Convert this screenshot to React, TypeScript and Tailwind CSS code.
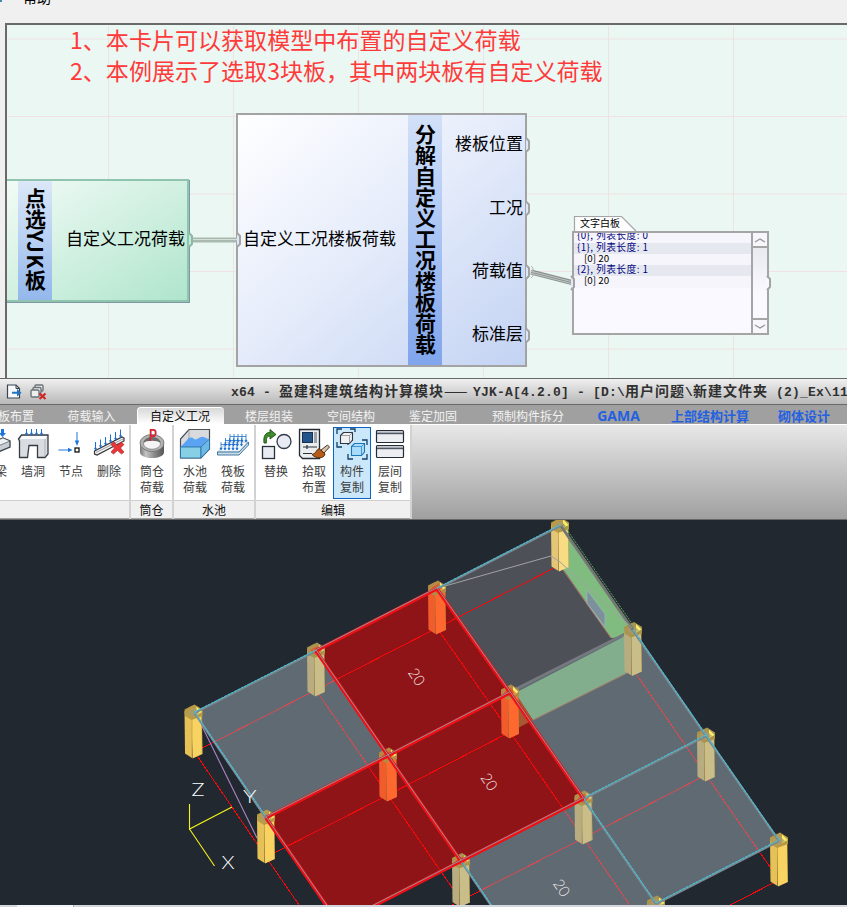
import React from "react";

const CJK = "font-['Noto_Sans_CJK_SC',sans-serif]";

/* ---------- node editor ---------- */

function Port({ x, y, color = "#a3a3a3", fill = "#dfe8f8" }: { x: number; y: number; color?: string; fill?: string }) {
  return (
    <path
      d={`M${x - 2} ${y - 7} l3 3 v8 l-3 3`}
      fill={fill}
      stroke={color}
      strokeWidth="2"
      strokeLinejoin="round"
    />
  );
}

function NodeCanvas() {
  return (
    <div className="relative ml-[5px] h-[355px] shrink-0 overflow-hidden border-l-2 border-t-2 border-[#6a6a6a] bg-[#eaf7f3]">
      <svg className="absolute -left-[7px] -top-[25px]" width="847" height="380" viewBox="0 0 847 380">
        <g stroke="#f0e2e2" strokeWidth="1">
          {[108.5, 233.5, 358.5, 483.5, 608.5, 733.5].map((x) => (
            <line key={x} x1={x} y1="26" x2={x} y2="380" />
          ))}
          {[39, 116.5, 194, 271.5, 349].map((y) => (
            <line key={y} x1="8" y1={y} x2="847" y2={y} />
          ))}
        </g>
      </svg>

      <div className={`absolute left-[63px] -top-px whitespace-pre text-[23.060px] leading-[31px] text-[#ff3a3a] ${CJK}`}>
        <div>1、本卡片可以获取模型中布置的自定义荷载</div>
        <div>2、本例展示了选取3块板，其中两块板有自定义荷载</div>
      </div>

      <div className="absolute -left-[4px] top-[154px] flex h-[123px] w-[186px] border-2 border-[#8fc4ae] bg-linear-to-br from-[#f2fbf7] to-[#afe5cc] shadow-[1px_1px_0_#7d98a3]">
        <div className="ml-[13px] flex w-[34px] items-center justify-center bg-linear-to-b from-[#dbe8f8] to-[#94b7ec]">
          <span className={`-mt-[3px] whitespace-nowrap text-[21px] font-bold leading-[21px] text-black [writing-mode:vertical-rl] ${CJK}`}>
            点选<span className="tracking-[1.200px]">YJK</span>板
          </span>
        </div>
        <div className={`flex flex-1 items-center justify-end pr-[2px] text-[17px] text-black ${CJK}`}>
          <span className="-mt-[6px]">自定义工况荷载</span>
        </div>
      </div>

      <div className="absolute left-[229px] top-[88px] flex h-[254px] w-[291px] border-2 border-[#a3a3a3] bg-linear-to-br from-white via-[#e4ebfa] to-[#c3d3f3]">
        <div className={`flex w-[170px] items-center pl-[5px] text-[17px] text-black ${CJK}`}>
          <span className="-mt-[5px] whitespace-nowrap">自定义工况楼板荷载</span>
        </div>
        <div className="flex w-[34px] items-center justify-center bg-linear-to-b from-[#d3e1f8] to-[#80a5ec]">
          <span className={`-mt-px whitespace-nowrap text-[21px] font-bold leading-[21px] text-black [writing-mode:vertical-rl] ${CJK}`}>分解自定义工况楼板荷载</span>
        </div>
        <div className={`flex flex-1 flex-col items-end pr-[2px] pt-[12px] text-[17px] text-black ${CJK}`}>
          <span className="h-[63.5px] leading-[32px]">楼板位置</span>
          <span className="h-[63.5px] leading-[32px]">工况</span>
          <span className="h-[63px] leading-[32px]">荷载值</span>
          <span className="leading-[32px]">标准层</span>
        </div>
      </div>

      <div className="absolute left-[565px] top-[206px] flex h-[104px] w-[197px] border-2 border-[#a5a5a5] bg-[#f9f9ff]">
        <div className={`flex-1 overflow-hidden whitespace-pre text-[9.8px] tracking-[0.400px] text-[#00007e] ${CJK}`}>
          <div className="flex h-[10px] items-center overflow-hidden bg-[#f6f5fb] pl-[3px] leading-none"><span className="-mt-[5px]">{"{0}, 列表长度: 0"}</span></div>
          <div className="h-[11px] bg-[#e5e8ef] pl-[3px] leading-[8px]">{"{1}, 列表长度: 1"}</div>
          <div className="h-[11px] bg-[#f6f5fb] pl-[10px] leading-[8px] tracking-normal text-black">[0] 20</div>
          <div className="h-[11px] bg-[#e5e8ef] pl-[3px] leading-[8px]">{"{2}, 列表长度: 1"}</div>
          <div className="h-[12px] bg-[#f6f5fb] pl-[10px] leading-[9px] tracking-normal text-black">[0] 20</div>
        </div>
        <div className="flex w-[16px] flex-col justify-between border-l-2 border-[#a5a5a5] bg-linear-to-b from-[#e4e5ea] to-[#f9f9ff] to-60%">
          <div className="flex h-[15px] items-center justify-center border-b-2 border-[#a5a5a5] bg-[#f6f6fb]">
            <svg width="12" height="6" viewBox="0 0 12 6"><path d="M1 5 L6 2 L11 5" fill="none" stroke="#999" strokeWidth="1.4" /></svg>
          </div>
          <div className="flex h-[15px] items-center justify-center border-t-2 border-[#a5a5a5] bg-[#f6f6fb]">
            <svg width="12" height="6" viewBox="0 0 12 6"><path d="M1 1 L6 4 L11 1" fill="none" stroke="#999" strokeWidth="1.4" /></svg>
          </div>
        </div>
      </div>

      <svg className="absolute -left-[7px] -top-[25px]" width="847" height="380" viewBox="0 0 847 380">
        <path d="M574.5 231 V216.5 H621.5 L636 231" fill="#fdfdff" stroke="#a5a5a5" strokeWidth="1.2" />
        <g>
          <line x1="193" y1="240" x2="238" y2="240" stroke="#a9b9b1" strokeWidth="5" />
          <line x1="193" y1="239.5" x2="238" y2="239.5" stroke="#d2dfd9" strokeWidth="1" />
          <line x1="531" y1="272" x2="574" y2="283" stroke="#8a918f" strokeWidth="5" />
          <line x1="531" y1="271.2" x2="574" y2="282.2" stroke="#c5cbc9" strokeWidth=".9" />
          <line x1="531" y1="273.2" x2="574" y2="284.2" stroke="#c5cbc9" strokeWidth=".9" />
        </g>
        <Port x={191} y={240} color="#8db7a6" fill="#c4ead8" />
        <Port x={239} y={240} />
        <Port x={528} y={145} />
        <Port x={528} y={208.5} />
        <Port x={528} y={272} />
        <Port x={528} y={335.5} />
        <Port x={573} y={283} />
        <Port x={769} y={283} fill="#f9f9ff" />
        <path d="M531 266 l2 2 v8 l-2 2" fill="none" stroke="#b5b5b5" strokeWidth="1" />
      </svg>
      <div className={`absolute left-[573px] top-[190px] text-[10px] leading-[15px] text-black ${CJK}`}>文字白板</div>
    </div>
  );
}

/* ---------- ribbon icons ---------- */

function Arrow({ x, y, len, w = 1 }: { x: number; y: number; len: number; w?: number }) {
  return (
    <g stroke="#1c6fd0" fill="#1c6fd0">
      <line x1={x} y1={y} x2={x} y2={y + len} strokeWidth={w} />
      <path d={`M${x - 1.2} ${y + len - 2} h2.4 l-1.2 2.2z`} strokeWidth="0.4" />
    </g>
  );
}

function Icon({ children }: { children: React.ReactNode }) {
  return (
    <svg width="32" height="32" viewBox="0 0 32 32" className="shrink-0">
      {children}
    </svg>
  );
}

const BeamIcon = () => (
  <Icon>
    <path d="M4 18 L24 10 L31 13 V19 L12 27 L4 24z" fill="#c8ced4" stroke="#39424b" strokeWidth="1.3" />
    <path d="M4 18 L24 10 L31 13 L12 21z" fill="#eef1f3" stroke="#39424b" strokeWidth=".6" />
    <path d="M22 1 h3 v4 h2 l-3.500 4 l-3.500 -4 h2z" fill="#1c75dd" />
  </Icon>
);

const WallIcon = () => (
  <Icon>
    <path d="M1.500 11 L4.500 7 H31 V26 L28 29.500 H20.500 V17.500 H12 L10.500 29.500 H2.500 V13z" fill="#d9dce0" stroke="#343c44" strokeWidth="1.300" />
    <path d="M3 11 L5 8 H30 L28 11z" fill="#fafbfb" />
    <path d="M28 11 V28.500" stroke="#a5acb2" strokeWidth=".8" />
    {[9.5, 14.5, 19.5, 24.5].map((x) => <Arrow key={x} x={x} y={1} len={6} />)}
  </Icon>
);

const JointIcon = () => (
  <Icon>
    <rect x="20" y="20" width="4" height="4" fill="#fff" stroke="#111" strokeWidth="1.3" />
    <path d="M22 4 V14 M3.500 22 H14" stroke="#1c75dd" strokeWidth="1" />
    <path d="M19.800 12.500 h4.400 l-2.200 5.500z M13 19.800 v4.400 l4.500 -2.200z" fill="#1c75dd" />
  </Icon>
);

const DeleteIcon = () => (
  <Icon>
    <path d="M1.500 23 L29 9 L31 10 V13 L4 27 L1.500 26z" fill="#f0f0f0" stroke="#333" strokeWidth="1.2" />
    <path d="M3 24.500 L30 11" stroke="#9aa1a8" strokeWidth="1" />
    <Arrow x={2.5} y={14} len={8} />
    <Arrow x={7.500} y={11.500} len={8} />
    <Arrow x={12.500} y={9} len={8} />
    <Arrow x={17.500} y={6.500} len={8} />
    <Arrow x={22.500} y={4} len={8} />
    <Arrow x={27.500} y={1.500} len={8} />
    <path d="M19 15 L21 14 L24.500 17.500 L28 14 L31 16.500 L27.500 20 L31 24 L28.500 26 L24.500 22.500 L20.500 26 L18 24 L21.500 20 L18 16.500z" fill="#e8373a" stroke="#a91a1d" strokeWidth=".6" />
  </Icon>
);

const SiloIcon = () => (
  <Icon>
    <defs>
      <linearGradient id="silo"><stop offset="0" stopColor="#777" /><stop offset=".25" stopColor="#c4c4c4" /><stop offset=".6" stopColor="#8a8a8a" /><stop offset="1" stopColor="#555" /></linearGradient>
    </defs>
    <path d="M4 15 V24 C4 32 28 32 28 24 V15z" fill="url(#silo)" />
    <ellipse cx="16" cy="15" rx="12" ry="8.500" fill="#b2b2b2" stroke="#6d6d6d" strokeWidth=".8" />
    <ellipse cx="16" cy="15.500" rx="8.500" ry="5.800" fill="#f4f4f4" stroke="#777" strokeWidth=".7" />
    <path d="M7.500 15 A8.500 6 0 0 1 24.500 15 A9.500 4 0 0 0 7.500 15" fill="#6b6b6b" />
    <text x="13" y="12.500" fontFamily="Liberation Sans" fontWeight="bold" fontSize="16" textLength="8" lengthAdjust="spacingAndGlyphs" fill="#d72532">P</text>
  </Icon>
);

const PoolIcon = () => (
  <Icon>
    <path d="M1.500 11 L10 1.500 H30.500 V21 L22 30 H1.500z" fill="#d8dadd" stroke="#4a4f55" strokeWidth="1.200" />
    <path d="M10 2 V12" fill="none" stroke="#999" strokeWidth=".8" />
    <path d="M1.500 19 L8 12 C10 9 13 9 15 11 C18 13 21 8 24 9 C26 9 28 11 30 11 L22 19 V21 H1.500z" fill="#5aa3f2" />
    <path d="M1.500 19 H22 V30 H1.500z" fill="#86cfe4" stroke="#24699f" strokeWidth=".8" />
    <path d="M22 19 L30.500 11 V21 L22 30z" fill="#6db9e6" stroke="#24699f" strokeWidth=".8" />
  </Icon>
);

const RaftIcon = () => (
  <Icon>
    <path d="M0.500 24 L10 14 H31 L22 24z" fill="#f4f8fb" stroke="#a9bccb" strokeWidth=".8" />
    <path d="M0.500 24 H22 L31.500 14 V17 L22 27 H0.500z" fill="#c4dcec" stroke="#386b93" strokeWidth=".9" />
    {[0, 1, 2].map((r) => (
      <g key={r}>
        <line x1={4 + r * 4.500} y1={16.500 - r * 4} x2={20 + r * 4.500} y2={16.500 - r * 4} stroke="#2a77cf" strokeWidth=".8" />
        {[0, 1, 2, 3, 4].map((c) => <Arrow key={c} x={4 + r * 4.500 + c * 4} y={14 - r * 4} len={8} w={0.8} />)}
      </g>
    ))}
  </Icon>
);

const SwapIcon = () => (
  <Icon>
    <rect x="2.500" y="18.500" width="12" height="12" fill="#e9ebf2" stroke="#26303b" strokeWidth="1.300" />
    <circle cx="24" cy="13.500" r="7" fill="#e9ebf4" stroke="#303a47" strokeWidth="1.300" />
    <path d="M4 15 C3 8 6 4 10 4.500 V1.500 L16 6.500 L10 11 V8 C7 8 6 10 6.500 15z" fill="#3d8d2c" stroke="#1e5016" strokeWidth=".9" />
  </Icon>
);

const PickIcon = () => (
  <Icon>
    <path d="M1.500 1.500 H21.500 V30.500 H4.500 L1.500 27.500z" fill="#ebecee" stroke="#252c36" strokeWidth="1.300" />
    <rect x="4.500" y="4.500" width="10" height="10" fill="#21558c" stroke="#17314f" />
    <rect x="16" y="4" width="3" height="11" fill="#9da2aa" />
    <path d="M5 19 H19 M9 17 V21 M5 25.500 H14" stroke="#29313a" strokeWidth="1.200" />
    <path d="M29.500 17 L31.500 19 L26 25 L23 22z" fill="#d5c3ae" stroke="#4a3a2c" />
    <path d="M21 20.500 L27 26 C26 31 18 31 14 26.500 C18 26 18 22 21 20.500z" fill="#b65c18" stroke="#54290d" />
  </Icon>
);

const CopyIcon = () => (
  <Icon>
    <path d="M1 6 V1 H6 M14 1 H19 V4 M1 14 V19 H6 M12 17 V12 H17 M26 12 H31 V17 M12 26 V31 H17 M26 31 H31 V26" fill="none" stroke="#123e66" strokeWidth="1.300" />
    <path d="M4.500 7.500 L7.500 4.500 H16.500 V12 L13.500 15.500 H4.500z" fill="#f0f1f2" stroke="#30363d" strokeWidth="1.100" />
    <path d="M4.500 7.500 H13.500 V15.500 M13.500 7.500 L16.500 4.500" fill="none" stroke="#777d84" strokeWidth=".7" />
    <path d="M15.500 18.500 L18.500 15.500 H28.500 V24 L25.500 27.500 H15.500z" fill="#a8dcfa" stroke="#1978b7" strokeWidth="1.100" />
    <path d="M15.500 18.500 H25.500 V27.500 M25.500 18.500 L28.500 15.500" fill="none" stroke="#1978b7" strokeWidth=".7" />
  </Icon>
);

const FloorIcon = () => (
  <Icon>
    {[2.5, 17.5].map((y) => (
      <g key={y}>
        <rect x="2.500" y={y} width="27" height="12" rx="1" fill="#eceef2" stroke="#252c36" strokeWidth="1.200" />
        <rect x="3" y={y + 1} width="26" height="2" fill="#a3a9b0" />
        <path d={`M2.5 ${y + 3.2} H29.5`} stroke="#252c36" strokeWidth=".9" />
      </g>
    ))}
  </Icon>
);

/* ---------- ribbon ---------- */

function Tool({ icon, lines, selected = false }: { icon: React.ReactNode; lines: string[]; selected?: boolean }) {
  return (
    <div
      className={`flex h-[72px] w-[38px] shrink-0 flex-col items-center border ${
        selected ? "border-[#0a64c0] bg-[#cbe8fa]" : "border-transparent"
      }`}
    >
      {icon}
      <div className={`mt-[3px] text-center text-[12px] leading-[16px] text-[#3c3c3c] ${CJK}`}>
        {lines.map((l) => (
          <div key={l}>{l}</div>
        ))}
      </div>
    </div>
  );
}

function Group({ label, width, children }: { label: string; width: string; children: React.ReactNode }) {
  return (
    <div className={`flex flex-col border-r-2 border-[#d2d2d2] ${width}`}>
      <div className="flex h-[75px] justify-end overflow-hidden bg-white pt-[2px]">{children}</div>
      <div className={`h-[18px] border-t border-[#cfcfcf] bg-[#f0f0f0] text-center text-[12px] leading-[18px] text-[#111] ${CJK}`}>{label}</div>
    </div>
  );
}

type Run = { text: string; kind: "cjk" | "latin" | "dash" };
const titleRuns: Run[] = [
  { text: "x64 - ", kind: "latin" },
  { text: "盈建科建筑结构计算模块", kind: "cjk" },
  { text: "——", kind: "dash" },
  { text: "YJK-A[4.2.0] - [D:\\", kind: "latin" },
  { text: "用户问题", kind: "cjk" },
  { text: "\\", kind: "latin" },
  { text: "新建文件夹", kind: "cjk" },
  { text: " (2)_Ex\\11", kind: "latin" },
];
const runStyle = {
  cjk: "text-[14px] tracking-[1px] font-['Noto_Sans_CJK_SC',sans-serif]",
  latin: "text-[13px] tracking-[0.200px] font-['Liberation_Mono',monospace]",
  dash: "text-[14px] w-[29px] tracking-[1px] font-normal font-['Noto_Sans_CJK_SC',sans-serif]",
};

function Ribbon() {
  return (
    <div className="flex h-[142px] shrink-0 flex-col border-y border-[#686868]">
      <div className="flex h-[25px] items-center overflow-hidden bg-linear-to-b from-[#f0f0f0] to-[#b9b9b9]">
        <svg width="231" height="25" viewBox="0 379 231 25" className="shrink-0">
          <path d="M7.500 385 H16 L19.500 388.500 V398 H7.500z" fill="#f7f8fa" stroke="#3a4450" strokeWidth="1.200" />
          <path d="M16 385 V388.500 H20" fill="none" stroke="#3a4450" />
          <path d="M12 391.800 H17 V389 L21.500 392.800 L17 396.500 V393.800 H12z" fill="#2373c4" />
          <rect x="35" y="385" width="8" height="6" rx="1" fill="#eee" stroke="#6b7278" strokeWidth="1.400" />
          <rect x="33" y="387.500" width="8" height="6" rx="1" fill="#eee" stroke="#6b7278" strokeWidth="1.400" />
          <rect x="31" y="390" width="8" height="7" rx="1" fill="#eee" stroke="#6b7278" strokeWidth="1.400" />
          <path d="M39.500 393.500 L45.500 399 M45.500 393.500 L39.500 399" stroke="#cf2424" strokeWidth="2.200" />
        </svg>
        <div className="flex items-baseline whitespace-pre font-bold leading-[22px] text-[#303030]">
          {titleRuns.map((r, i) => (
            <span key={i} className={runStyle[r.kind]}>{r.text}</span>
          ))}
        </div>
      </div>

      <div className={`flex h-[21px] border-b border-t border-b-white border-t-[#6a6a6a] bg-[#a0a0a0] text-center text-[12px] leading-[21px] text-[#f2f2f2] ${CJK}`}>
        <div className="w-[50px] text-left">
          <span className="-ml-[2px]">板布置</span>
        </div>
        <div className="w-[83px]">荷载输入</div>
        <div className="ml-[4px] mt-[2px] w-[87px] rounded-t-sm border-l border-t border-white bg-linear-to-b from-[#d8d8d8] to-white pr-[2px] leading-[15px] text-[#111]">自定义工况</div>
        <div className="ml-[4px] w-[82px]">楼层组装</div>
        <div className="w-[82px]">空间结构</div>
        <div className="w-[82px]">鉴定加固</div>
        <div className="w-[108px]">预制构件拆分</div>
        <div className="w-[73px] text-[14px] font-bold text-[#2460e0] font-['Open_Sans',sans-serif]">GAMA</div>
        <div className="w-[110px] text-[13px] font-bold text-[#2460e0]">上部结构计算</div>
        <div className="w-[78px] text-[13px] font-bold text-[#2460e0]">砌体设计</div>
      </div>

      <div className="flex h-[94px] bg-linear-to-b from-[#e8e8e8] to-[#a0a0a0]">
        <Group label="" width="w-[131px] [&>div:first-child]:pr-px">
          <Tool icon={<BeamIcon />} lines={["主梁"]} />
          <Tool icon={<WallIcon />} lines={["墙洞"]} />
          <Tool icon={<JointIcon />} lines={["节点"]} />
          <Tool icon={<DeleteIcon />} lines={["删除"]} />
        </Group>
        <Group label="筒仓" width="w-[43px] [&>div:first-child]:pr-[1px]">
          <Tool icon={<SiloIcon />} lines={["筒仓", "荷载"]} />
        </Group>
        <Group label="水池" width="w-[82px] [&>div:first-child]:pr-[2px]">
          <Tool icon={<PoolIcon />} lines={["水池", "荷载"]} />
          <Tool icon={<RaftIcon />} lines={["筏板", "荷载"]} />
        </Group>
        <Group label="编辑" width="w-[156px] [&>div:first-child]:pr-px">
          <Tool icon={<SwapIcon />} lines={["替换"]} />
          <Tool icon={<PickIcon />} lines={["拾取", "布置"]} />
          <Tool icon={<CopyIcon />} lines={["构件", "复制"]} selected />
          <Tool icon={<FloorIcon />} lines={["层间", "复制"]} />
        </Group>
      </div>
    </div>
  );
}

/* ---------- 3D model view ---------- */

type P = [number, number];
const N: Record<string, P> = {
  A: [560, 525], B: [437, 588], C: [316, 650], D: [194.500, 712],
  E: [633, 629.500], F: [510, 692], G: [388, 755], H: [266, 817],
  I: [706, 735], J: [583.500, 798], K: [461, 860.500], L: [339, 923],
  M: [779, 840], O: [656, 903], Q: [533, 966],
};
const poly = (k: string) => k.split("").map((c) => N[c].join(",")).join(" ");

const greySlabs = ["DCGH", "FEIJ", "KJOQ", "JIMO"];
const redSlabs = ["CBFG", "GFJK", "HGKL"];
const baseEdges = ["DC", "CB", "BA", "HG", "GF", "KJ", "JI", "LK", "OM", "DH", "HL", "CG", "GK", "KQ", "BF", "FJ", "JO", "EI", "IM"];
const cyanEdges = ["DC", "DH", "BA", "EI", "IM", "IJ", "JO", "OM", "KQ"];
const redEdges = ["CB", "CG", "BF", "GF", "FJ", "GK", "HG", "HL", "JK", "KL"];

const tones: Record<string, [string, string, string]> = {
  yellow: ["#e6c158", "#f8d362", "#b99c48"],
  light: ["#e3c676", "#f8dc83", "#b99c48"],
  pale: ["#b8ad80", "#c9bd89", "#aa9550"],
  red: ["#f05c2c", "#ff6930", "#b58a48"],
};

function Column({ at, tone }: { at: string; tone: string }) {
  const [x, y] = N[at];
  const [l, r, t] = tones[tone];
  const onRed = "CBGFJKH".includes(at);
  return (
    <g transform={`translate(${x + (at === "D" ? 0 : 1)} ${y})`}>
      <path d="M-10 -1 L-2.500 6 V46 L-9.500 41.500z" fill={l} />
      <path d="M-3 6 L7 0 L8 42 L-2 46.500z" fill={r} />
      <path d="M-2.500 6 V46" stroke="#a88530" strokeWidth=".8" opacity=".6" />
      <path d="M-10 -2.500 L0 -7.500 L8 -2.500 V4 L-3 8 L-9.500 4z" fill={t} />
      <path d="M2 -5.500 L7.500 0 L2 3z" fill={tone === "pale" && onRed ? "#d8cd88" : "#faf06a"} />
      <path d="M-7 0 L0 -4 L5 1 L-2 5z" fill={onRed && at !== "H" ? "#e0522c" : "#a59b74"} opacity=".75" />
      <path d="M-9.500 -2 L-3 -6 M-3 7 L7.500 2 V42" fill="none" stroke="#b38d2e" strokeWidth=".7" opacity=".6" />
    </g>
  );
}

function BaseLines({ color }: { color: string }) {
  return (
    <g stroke={color} strokeWidth="1" shapeRendering="crispEdges">
      {baseEdges.map((e) => (
        <line key={e} x1={N[e[0]][0]} y1={N[e[0]][1] + 40} x2={N[e[1]][0]} y2={N[e[1]][1] + 40} />
      ))}
    </g>
  );
}

function ModelView() {
  const cols: [string, string][] = [
    ["A", "light"], ["B", "red"], ["C", "pale"], ["D", "yellow"],
    ["E", "pale"], ["F", "red"], ["G", "red"], ["H", "yellow"],
    ["I", "pale"], ["J", "pale"], ["K", "pale"], ["M", "yellow"], ["O", "pale"],
  ];
  return (
    <svg width="847" height="385" viewBox="0 520 847 385" className="block shrink-0 bg-[#222830]">
      <defs>
        <clipPath id="redArea">{redSlabs.map((s) => <polygon key={s} points={poly(s)} />)}</clipPath>
        <clipPath id="greyArea">{greySlabs.map((s) => <polygon key={s} points={poly(s)} />)}</clipPath>
      </defs>
      <polygon points={poly("BAEF")} fill="#4d5157" />
      <BaseLines color="#f80808" />
      {greySlabs.map((s) => <polygon key={s} points={poly(s)} fill="#606a72" />)}
      <g clipPath="url(#greyArea)"><BaseLines color="#d94a50" /></g>
      {redSlabs.map((s) => <polygon key={s} points={poly(s)} fill="#8f1417" />)}
      <g clipPath="url(#redArea)"><BaseLines color="#f80808" /></g>

      <polygon points="560,525 634,630 628,637 611,638 563,569" fill="#80bb80" />
      <path d="M563 570 L611 638" stroke="#b46f6b" strokeWidth="1" />
      <polygon points="587,590 605,614 605,627 587,603" fill="#7c909b" stroke="#9db5c2" strokeWidth=".8" />
      <polygon points="515,693 629,634 629,672 533,720" fill="#83ae8d" />
      <polygon points="518,697 533,720 518,728" fill="#aa5632" />
      <path d="M533 720 L629 672" stroke="#a9806e" strokeWidth="1" />
      <path d="M512 691 L631 631" stroke="#74797f" strokeWidth="3" />
      <path d="M198 718 L257 838 M198 718 L264 816" stroke="#ad85c6" strokeWidth="1.100" fill="none" />

      {cols.map(([k, t]) => <Column key={k} at={k} tone={t} />)}

      <path d="M561 526 L633 630" stroke="#737773" strokeWidth="3" />
      <path d="M563 524 L635 628" stroke="#5aa75e" strokeWidth="1" strokeDasharray="2 1" />
      <path d="M445 586 L551 556 L560 562 L632 628" fill="none" stroke="#a2a2a4" strokeWidth="1" />
      {cyanEdges.map((e) => {
        const [a, b] = [N[e[0]], N[e[1]]];
        return (
          <g key={e}>
            <line x1={a[0]} y1={a[1] + 1} x2={b[0]} y2={b[1] + 1} stroke="#7b868d" strokeWidth="2.200" />
            <line x1={a[0]} y1={a[1]} x2={b[0]} y2={b[1]} stroke="#45c3da" strokeWidth="1.100" strokeDasharray="3 .700" />
          </g>
        );
      })}
      {redEdges.map((e) => {
        const [a, b] = [N[e[0]], N[e[1]]];
        return <line key={e} x1={a[0]} y1={a[1] + 0.7} x2={b[0]} y2={b[1] + 0.7} stroke="#f01014" strokeWidth="3.600" />;
      })}
      {redEdges.map((e) => {
        const [a, b] = [N[e[0]], N[e[1]]];
        return <line key={e} x1={a[0]} y1={a[1] - 0.3} x2={b[0]} y2={b[1] - 0.3} stroke="#8c93a0" strokeWidth="1" />;
      })}

      <g fill="#f1e6e6" fontFamily="Lato" fontWeight="300" fontSize="15" textAnchor="middle">
        <text transform="translate(416.500 677) rotate(56)" y="5">20</text>
        <text transform="translate(489 782) rotate(56)" y="5">20</text>
        <text transform="translate(561.500 888) rotate(56)" y="5">20</text>
      </g>
      <path d="M189.500 804 V829 L232 807 M189.500 829 L214.500 866" fill="none" stroke="#f4f416" strokeWidth="1.100" />
      <g fill="#fff" fontFamily="Lato" fontWeight="300" fontSize="17.500">
        <text x="191.500" y="796" textLength="13" lengthAdjust="spacingAndGlyphs">Z</text>
        <text x="243" y="803" textLength="13.500" lengthAdjust="spacingAndGlyphs">Y</text>
        <text x="221.500" y="869" textLength="13" lengthAdjust="spacingAndGlyphs">X</text>
      </g>
    </svg>
  );
}

export default function App() {
  return (
    <div className="flex h-[907px] w-[847px] flex-col overflow-hidden bg-[#f0f0f0]">
      <div className={`relative h-[23px] shrink-0 overflow-hidden text-[14px] leading-[20px] text-black ${CJK}`}>
        <span className="absolute -top-[13px] left-[23px]">帮助</span>
        <span className="absolute left-0 top-0 h-[2px] w-[2px] bg-[#3d8ba8]" />
      </div>
      <NodeCanvas />
      <Ribbon />
      <ModelView />
      <div className="flex h-[2px] shrink-0 bg-[#d3d7dd]">
        <div className="ml-[17px] w-[57px] border-r border-[#a9adb3] bg-[#f2f5f8]" />
      </div>
    </div>
  );
}
